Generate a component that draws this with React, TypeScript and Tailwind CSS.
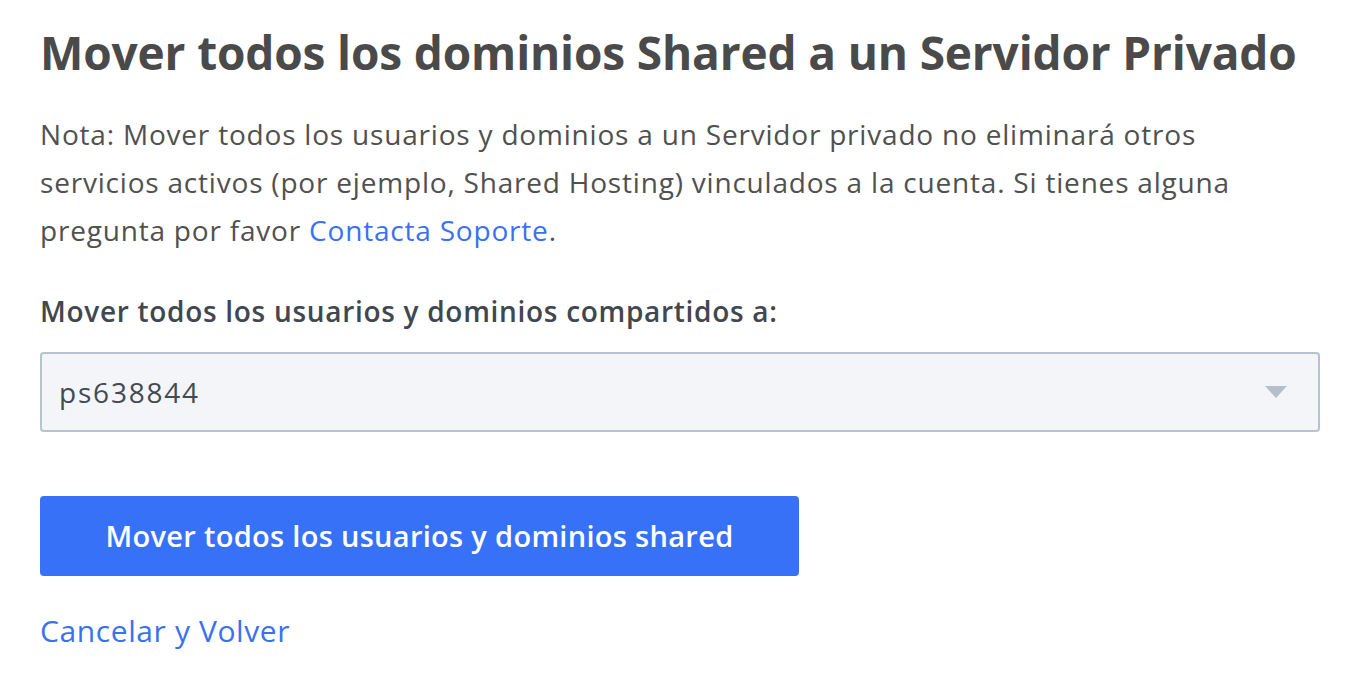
import React from "react";

const App: React.FC = () => {
  return (
    <div className="min-h-screen bg-white px-[40px] pt-[22px] font-['Open_Sans',sans-serif]">
      <div className="w-[1280px]">
        <h1 className="text-[46px] font-bold leading-[60px] tracking-[-0.15px] text-[#4a4a4a]">
          Mover todos los dominios Shared a un Servidor Privado
        </h1>
        <p className="mt-[28px] text-[28px] leading-[48px] tracking-[0.8px] text-[#50514f]">
          Nota: Mover todos los usuarios y dominios a un Servidor privado no eliminará otros
          <br />
          servicios activos (por ejemplo, Shared Hosting) vinculados a la cuenta. Si tienes alguna
          <br />
          pregunta por favor{" "}
          <a href="#" className="text-[#3a71f2]">
            Contacta Soporte
          </a>
          .
        </p>
        <label className="mt-[37px] block text-[28px] font-semibold leading-[40px] tracking-[0.7px] text-[#41474f]">
          Mover todos los usuarios y dominios compartidos a:
        </label>
        <div className="mt-[21px] flex h-[80px] items-center justify-between rounded-[4px] border-2 border-[#b6c2ce] bg-[#f3f5f9] pl-[17px] pr-[31px]">
          <span className="text-[28px] tracking-[1.8px] text-[#454a52]">ps638844</span>
          <svg width="22" height="12" viewBox="0 0 22 12">
            <polygon points="0,0 22,0 11,12" fill="#b3c0cc" />
          </svg>
        </div>
        <button className="mt-[64px] flex h-[80px] w-[759px] items-center justify-center rounded-[4px] bg-[#3671f7] text-[29px] font-semibold tracking-[0.3px] text-white">
          Mover todos los usuarios y dominios shared
        </button>
        <a href="#" className="mt-[35px] block text-[30px] leading-[40px] tracking-[0.6px] text-[#3a71f2]">
          Cancelar y Volver
        </a>
      </div>
    </div>
  );
};

export default App;
